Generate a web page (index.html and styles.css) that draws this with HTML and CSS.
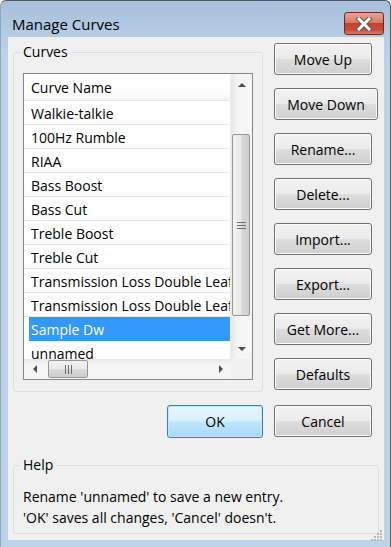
FILE: index.html
```html
<!DOCTYPE html>
<html lang="en">
  <head>
    <meta charset="UTF-8" />
    <title>Manage Curves</title>
    <link rel="stylesheet" href="styles.css">
  </head>
  <body>
    <div class="window">
      <div class="titlebar">
        <span class="title">Manage Curves</span>
        <button class="close-btn" aria-label="Close">
          <svg width="18" height="14" viewBox="0 0 18 14">
            <path d="M4 2 L14 12 M14 2 L4 12" stroke="#5a5a5a" stroke-width="5" stroke-linecap="square" />
            <path d="M4 2 L14 12 M14 2 L4 12" stroke="#ffffff" stroke-width="3" stroke-linecap="square" />
          </svg>
        </button>
      </div>

      <div class="client">
        <div class="main">
          <div class="group curves">
            <span class="group-label">Curves</span>
            <div class="listbox">
              <div class="list-top">
                <div class="list-cols">
                  <div class="list-header"><span>Curve Name</span></div>
                  <div class="list-row">Walkie-talkie</div>
                  <div class="list-row">100Hz Rumble</div>
                  <div class="list-row">RIAA</div>
                  <div class="list-row">Bass Boost</div>
                  <div class="list-row">Bass Cut</div>
                  <div class="list-row">Treble Boost</div>
                  <div class="list-row">Treble Cut</div>
                  <div class="list-row">Transmission Loss Double Leaf</div>
                  <div class="list-row">Transmission Loss Double Leaf</div>
                  <div class="list-row selected">Sample Dw</div>
                  <div class="list-row">unnamed</div>
                </div>
                <div class="vscroll">
                  <div class="arrow-box"><span class="arrow up"></span></div>
                  <div class="vtrack">
                    <div class="vthumb">
                      <svg width="9" height="7" viewBox="0 0 9 7">
                        <path d="M0 0.5 H9 M0 3.5 H9 M0 6.5 H9" stroke="#6b6b6b" stroke-width="1" />
                      </svg>
                    </div>
                  </div>
                  <div class="arrow-box"><span class="arrow down"></span></div>
                </div>
              </div>
              <div class="list-bottom">
                <div class="hscroll">
                  <div class="arrow-box h"><span class="arrow left"></span></div>
                  <div class="htrack">
                    <div class="hthumb">
                      <svg width="7" height="9" viewBox="0 0 7 9">
                        <path d="M0.5 0 V9 M3.5 0 V9 M6.5 0 V9" stroke="#6b6b6b" stroke-width="1" />
                      </svg>
                    </div>
                  </div>
                  <div class="arrow-box h"><span class="arrow right"></span></div>
                </div>
                <div class="corner"></div>
              </div>
            </div>
          </div>

          <div class="side-buttons">
            <button class="btn">Move Up</button>
            <button class="btn wide">Move Down</button>
            <button class="btn">Rename...</button>
            <button class="btn">Delete...</button>
            <button class="btn">Import...</button>
            <button class="btn">Export...</button>
            <button class="btn">Get More...</button>
            <button class="btn">Defaults</button>
          </div>
        </div>

        <div class="dialog-buttons">
          <button class="btn default">OK</button>
          <button class="btn">Cancel</button>
        </div>

        <div class="group help">
          <span class="group-label">Help</span>
          <p>Rename 'unnamed' to save a new entry.</p>
          <p>'OK' saves all changes, 'Cancel' doesn't.</p>
        </div>

        <div class="grip">
          <svg width="12" height="12" viewBox="0 0 12 12">
            <g fill="#b8b8b8">
              <rect x="9" y="0" width="2" height="2" />
              <rect x="6" y="3" width="2" height="2" />
              <rect x="9" y="3" width="2" height="2" />
              <rect x="3" y="6" width="2" height="2" />
              <rect x="6" y="6" width="2" height="2" />
              <rect x="9" y="6" width="2" height="2" />
              <rect x="0" y="9" width="2" height="2" />
              <rect x="3" y="9" width="2" height="2" />
              <rect x="6" y="9" width="2" height="2" />
              <rect x="9" y="9" width="2" height="2" />
            </g>
          </svg>
        </div>
      </div>
    </div>
  </body>
</html>
```

FILE: styles.css
```css
/* Base */
body {
  margin: 0;
  background-color: #ffffff;
  font-family: "Open Sans", "Noto Sans", sans-serif;
  font-size: 14px;
  color: #000;
}

button {
  font-family: inherit;
  font-size: inherit;
  color: inherit;
}

/* Window frame */
.window {
  width: 391px;
  height: 547px;
  box-sizing: border-box;
  border: 1px solid #4b5a6b;
  border-left-color: #8fa6c0;
  border-bottom: none;
  border-radius: 6px 6px 0 0;
  background: linear-gradient(#a7bfda 0px, #b6cde6 37px, #bcd3ea 60px);
  overflow: hidden;
}

.titlebar {
  height: 36px;
  display: flex;
  align-items: flex-start;
  justify-content: space-between;
}

.title {
  margin: 13px 0 0 11px;
  font-size: 15px;
  line-height: 20px;
}

.close-btn {
  width: 40px;
  height: 23px;
  margin: 11px 6px 0 0;
  padding: 0;
  border: 1px solid #6e2a22;
  border-radius: 3px;
  background: linear-gradient(#e8a596 0%, #d97963 45%, #c3422d 50%, #c84b36 80%, #de7e66 100%);
  display: flex;
  align-items: center;
  justify-content: center;
}

.client {
  position: relative;
  width: 376px;
  height: 503px;
  margin-left: 7px;
  background-color: #f0f0f0;
  display: flex;
  flex-direction: column;
}

/* Group boxes */
.group {
  position: relative;
  box-sizing: border-box;
  border: 1px solid #d5dfe5;
  border-radius: 3px;
}

.group-label {
  position: absolute;
  top: -11px;
  left: 6px;
  padding: 0 3px;
  line-height: 20px;
  background-color: #f0f0f0;
}

.main {
  display: flex;
  align-items: flex-start;
  padding: 6px 0 0 5px;
  gap: 11px;
}

.curves {
  width: 250px;
  height: 340px;
  margin-top: 9px;
  padding: 20px 9px 0 9px;
}

/* List view */
.listbox {
  height: 307px;
  box-sizing: border-box;
  border: 1px solid #828790;
  background-color: #fff;
  display: flex;
  flex-direction: column;
}

.list-top {
  display: flex;
  height: 285px;
}

.list-cols {
  width: 207px;
  overflow: hidden;
}

.list-header {
  height: 27px;
  box-sizing: border-box;
  padding-left: 7px;
  line-height: 28px;
  background: linear-gradient(#ffffff 50%, #f7f8f9 100%);
  border-bottom: 1px solid #e3e5e8;
  box-shadow: inset 0 -2px 0 #f3f4f6;
}

.list-row {
  height: 24px;
  box-sizing: border-box;
  padding-left: 7px;
  line-height: 25px;
  white-space: nowrap;
  border-bottom: 1px solid #e6e6e6;
}

.list-row.selected {
  margin-left: 5px;
  padding-left: 2px;
  background-color: #3399ff;
  color: #fff;
  border-bottom-color: #3399ff;
}

/* Scroll bars */
.vscroll {
  width: 21px;
  display: flex;
  flex-direction: column;
  background: linear-gradient(90deg, #e7e7e7, #f5f5f5 30%, #f5f5f5);
  border-left: 1px solid #ececec;
}

.arrow-box {
  height: 21px;
  display: flex;
  align-items: center;
  justify-content: center;
  flex-shrink: 0;
}

.arrow-box.h {
  width: 21px;
  height: auto;
}

.arrow {
  width: 0;
  height: 0;
  border: 4px solid transparent;
}

.arrow.up {
  border-bottom: 4px solid #4d4d4d;
  border-top-width: 0;
}

.arrow.down {
  border-top: 4px solid #4d4d4d;
  border-bottom-width: 0;
}

.arrow.left {
  border-right: 4px solid #4d4d4d;
  border-left-width: 0;
}

.arrow.right {
  border-left: 4px solid #4d4d4d;
  border-right-width: 0;
}

.vtrack {
  flex: 1;
  padding: 39px 0 22px 1px;
}

.vthumb {
  height: 100%;
  width: 18px;
  box-sizing: border-box;
  border: 1px solid #979797;
  border-radius: 2px;
  background: linear-gradient(90deg, #f3f3f3, #e8e8e8 50%, #d6d6d6 55%, #cfcfcf);
  display: flex;
  align-items: center;
  justify-content: center;
}

.list-bottom {
  display: flex;
  height: 20px;
}

.hscroll {
  width: 207px;
  display: flex;
  background: linear-gradient(#e7e7e7, #f5f5f5 30%, #f5f5f5);
}

.htrack {
  flex: 1;
  padding: 1px 0 1px 3px;
}

.hthumb {
  width: 40px;
  height: 100%;
  box-sizing: border-box;
  border: 1px solid #979797;
  border-radius: 2px;
  background: linear-gradient(#f3f3f3, #e8e8e8 50%, #d6d6d6 55%, #cfcfcf);
  display: flex;
  align-items: center;
  justify-content: center;
}

.corner {
  flex: 1;
  background-color: #f0f0f0;
}

/* Buttons */
.side-buttons {
  display: flex;
  flex-direction: column;
  align-items: flex-start;
  gap: 13px;
}

.btn {
  width: 98px;
  height: 32px;
  padding: 0;
  border: 1px solid #707070;
  border-radius: 3px;
  background: linear-gradient(#f2f2f2 0%, #ebebeb 48%, #dddddd 52%, #cfcfcf 100%);
  box-shadow: inset 0 0 0 1px #fbfbfb;
}

.btn.wide {
  width: 104px;
}

.dialog-buttons {
  display: flex;
  justify-content: flex-end;
  gap: 11px;
  margin-top: 13px;
  padding-right: 12px;
}

.btn.default {
  width: 96px;
  height: 33px;
  border-color: #3c7fb1;
  background: linear-gradient(#eaf6fd 0%, #d9f0fc 48%, #bee6fd 52%, #a7d9f5 100%);
  box-shadow: inset 0 0 0 1px #bfe6fb;
}

/* Help box */
.help {
  width: 366px;
  height: 69px;
  margin: 27px 0 0 5px;
  padding: 20px 0 0 9px;
}

.help p {
  margin: 0;
  line-height: 21px;
}

.grip {
  position: absolute;
  right: 1px;
  bottom: 1px;
  width: 12px;
  height: 12px;
}
```
